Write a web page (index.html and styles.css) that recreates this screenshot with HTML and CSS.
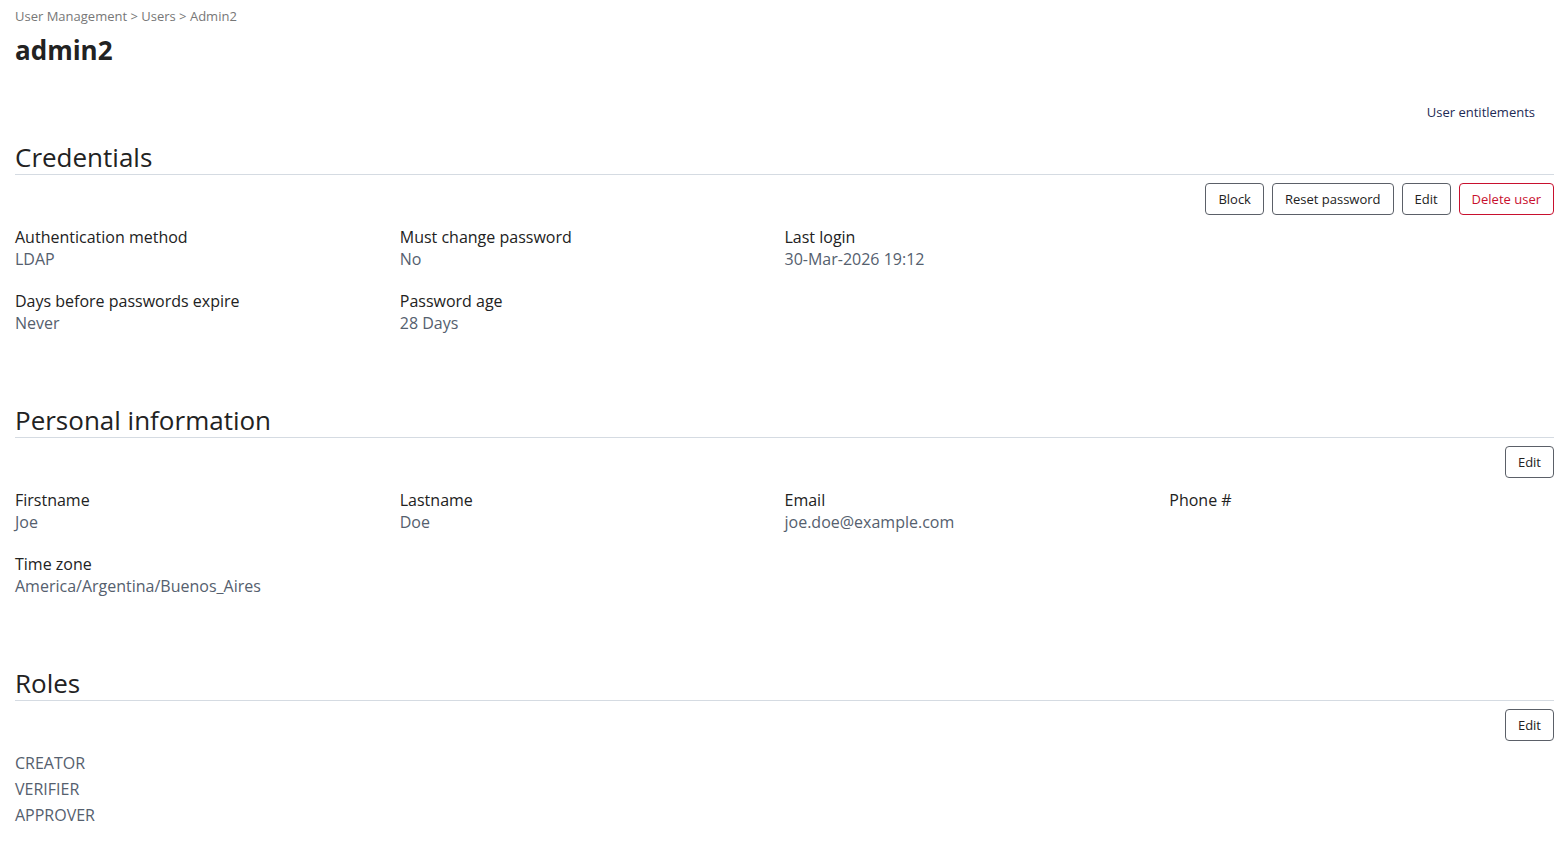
FILE: index.html
```html
<!DOCTYPE html>
<html lang="en">
<head>
    <meta charset="UTF-8">
    <meta name="viewport" content="width=device-width, initial-scale=1.0">
    <title>admin2 - User Management</title>
    <link rel="stylesheet" href="styles.css">
</head>
<body>

    <!-- Breadcrumb and title -->
    <div class="page">
        <div class="breadcrumb">User Management &gt; Users &gt; Admin2</div>
        <h1 class="page-title">admin2</h1>

        <div class="top-links">
            <a href="#" class="link">User entitlements</a>
        </div>

        <!-- Credentials -->
        <section class="section">
            <h2 class="section-title">Credentials</h2>
            <div class="actions">
                <button class="btn">Block</button>
                <button class="btn">Reset password</button>
                <button class="btn">Edit</button>
                <button class="btn btn-danger">Delete user</button>
            </div>
            <div class="fields">
                <div class="field">
                    <div class="field-label">Authentication method</div>
                    <div class="field-value">LDAP</div>
                </div>
                <div class="field">
                    <div class="field-label">Must change password</div>
                    <div class="field-value">No</div>
                </div>
                <div class="field">
                    <div class="field-label">Last login</div>
                    <div class="field-value">30-Mar-2026 19:12</div>
                </div>
                <div class="field"></div>
                <div class="field">
                    <div class="field-label">Days before passwords expire</div>
                    <div class="field-value">Never</div>
                </div>
                <div class="field">
                    <div class="field-label">Password age</div>
                    <div class="field-value">28 Days</div>
                </div>
            </div>
        </section>

        <!-- Personal information -->
        <section class="section">
            <h2 class="section-title">Personal information</h2>
            <div class="actions">
                <button class="btn">Edit</button>
            </div>
            <div class="fields">
                <div class="field">
                    <div class="field-label">Firstname</div>
                    <div class="field-value">Joe</div>
                </div>
                <div class="field">
                    <div class="field-label">Lastname</div>
                    <div class="field-value">Doe</div>
                </div>
                <div class="field">
                    <div class="field-label">Email</div>
                    <div class="field-value">joe.doe@example.com</div>
                </div>
                <div class="field">
                    <div class="field-label">Phone #</div>
                    <div class="field-value"></div>
                </div>
                <div class="field">
                    <div class="field-label">Time zone</div>
                    <div class="field-value">America/Argentina/Buenos_Aires</div>
                </div>
            </div>
        </section>

        <!-- Roles -->
        <section class="section">
            <h2 class="section-title">Roles</h2>
            <div class="actions">
                <button class="btn">Edit</button>
            </div>
            <ul class="roles">
                <li>CREATOR</li>
                <li>VERIFIER</li>
                <li>APPROVER</li>
            </ul>
        </section>
    </div>

</body>
</html>
```

FILE: styles.css
```css
/* General */
body {
    font-family: 'Open Sans', Arial, sans-serif;
    margin: 0;
    padding: 0;
    background-color: #ffffff;
    color: #222222;
}

.page {
    padding: 6px 11px 20px 15px;
}

.breadcrumb {
    font-size: 13px;
    line-height: 20px;
    color: #777777;
}

.page-title {
    font-size: 26px;
    font-weight: 700;
    line-height: 36px;
    margin: 6px 0 0 0;
    color: #222222;
}

/* Top right link */
.top-links {
    display: flex;
    justify-content: flex-end;
    padding-right: 19px;
    margin-top: 34px;
}

.link {
    font-size: 13px;
    line-height: 20px;
    color: #1d2a55;
    text-decoration: none;
}

/* Sections */
.section {
    margin-top: 18px;
}

.section + .section {
    margin-top: 69px;
}

.section-title {
    font-size: 26px;
    font-weight: 400;
    line-height: 34px;
    margin: 0;
    border-bottom: 1px solid #d5dbe2;
}

.actions {
    display: flex;
    justify-content: flex-end;
    gap: 8px;
    margin-top: 8px;
}

.btn {
    font-family: 'Open Sans', Arial, sans-serif;
    font-size: 13px;
    height: 32px;
    padding: 0 12px;
    background-color: #ffffff;
    color: #222222;
    border: 1px solid #5b6068;
    border-radius: 4px;
    cursor: pointer;
}

.btn-danger {
    color: #c8102e;
    border-color: #c8102e;
}

/* Fields grid */
.fields {
    display: grid;
    grid-template-columns: repeat(4, 1fr);
    row-gap: 20px;
    margin-top: 11px;
}

.field-label,
.field-value {
    font-size: 16px;
    line-height: 22px;
}

.field-value {
    color: #55606e;
}

/* Roles list */
.roles {
    list-style: none;
    margin: 9px 0 0 0;
    padding: 0;
}

.roles li {
    font-size: 16px;
    line-height: 26px;
    color: #55606e;
}
```
